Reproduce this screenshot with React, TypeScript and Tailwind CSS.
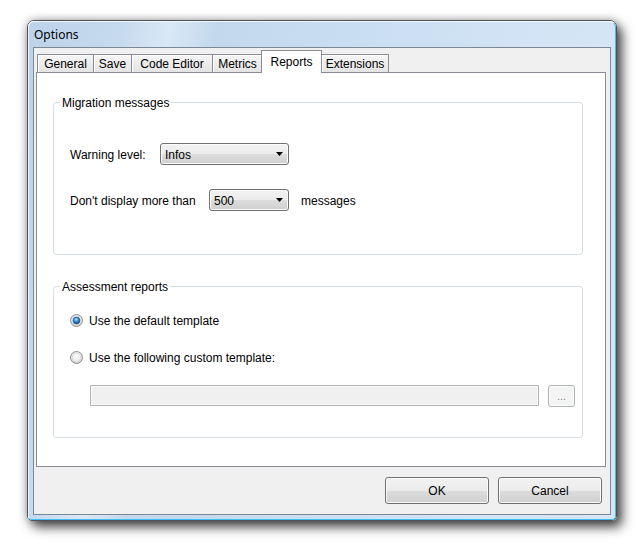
import React from "react";

function Radio({ checked, id }: { checked: boolean; id: string }) {
  return (
    <svg width="13" height="13" viewBox="0 0 13 13" className="shrink-0">
      <defs>
        <radialGradient id={`${id}-bg`} cx="50%" cy="40%" r="60%">
          <stop offset="0%" stopColor="#ffffff" />
          <stop offset="70%" stopColor="#e6e6e6" />
          <stop offset="100%" stopColor="#c4c4c4" />
        </radialGradient>
        <radialGradient id={`${id}-dot`} cx="45%" cy="35%" r="65%">
          <stop offset="0%" stopColor="#c4ebff" />
          <stop offset="45%" stopColor="#3893dc" />
          <stop offset="100%" stopColor="#0a4486" />
        </radialGradient>
      </defs>
      <circle cx="6.5" cy="6.5" r="6" fill={`url(#${id}-bg)`} stroke="#8e8f8f" strokeWidth="1" />
      <circle cx="6.5" cy="6.5" r="4.5" fill="none" stroke="#d4d4d4" strokeWidth="0.8" />
      {checked && <circle cx="6.5" cy="6.5" r="3.4" fill={`url(#${id}-dot)`} stroke="#174f8a" strokeWidth="0.6" />}
    </svg>
  );
}

function Arrow() {
  return (
    <svg width="7" height="4" viewBox="0 0 7 4" className="shrink-0">
      <path d="M0 0H7L3.5 4Z" fill="#000" />
    </svg>
  );
}

const vistaBtn =
  "rounded-[3px] border border-[#707070] bg-[linear-gradient(to_bottom,#f2f2f2_0%,#ebebeb_50%,#dddddd_50%,#cfcfcf_100%)] shadow-[inset_0_0_0_1px_#fcfcfc]";

const tabBase =
  "h-[18px] flex items-center justify-center border-t border-l border-[#898c95] bg-[linear-gradient(to_bottom,#f5f5f5,#e4e4e4)] shadow-[inset_1px_1px_0_#ffffff] text-[12px] text-black";

export default function App() {
  return (
    <div className="w-[644px] h-[551px] bg-white pl-[27px] pt-[20px] font-['Liberation_Sans',Arial,sans-serif]">
      {/* window */}
      <div className="w-[590px] h-[501px] border border-[#4d5259] rounded-t-[7px] rounded-b-[5px] shadow-[5px_6px_12px_rgba(0,0,0,0.7),0_0_10px_rgba(0,0,0,0.3)]">
        <div className="h-full border border-t-[#f3f8fd] border-l-[#eef5fc] border-r-[#3dbff0] border-b-[#3dbff0] rounded-t-[6px] rounded-b-[4px] px-[4px] pb-[4px] bg-[linear-gradient(100deg,#bdd3ea_0%,#c6daee_14%,#dae8f6_21%,#c3d8ed_28%,#cadef2_50%,#d2e4f5_75%,#d6e6f7_100%)] flex flex-col">
          {/* title */}
          <div className="h-[25px] flex items-center pl-[1px] text-[12px] text-black font-['Noto_Sans',sans-serif]">
            Options
          </div>
          {/* client */}
          <div className="flex-1 border border-[#7d8897] bg-[#f0f0f0] pt-[2px] pl-[2px] pr-[4px] flex flex-col">
            {/* tab strip */}
            <div className="h-[22px] flex items-end pl-[1px] relative z-10">
              <div className={`${tabBase} w-[56px]`}>General</div>
              <div className={`${tabBase} w-[38px]`}>Save</div>
              <div className={`${tabBase} w-[81px]`}>Code Editor</div>
              <div className={`${tabBase} w-[50px]`}>Metrics</div>
              <div className="relative z-10 h-[23px] -mb-px -ml-px -mr-px w-[61px] flex items-center justify-center border-t border-l border-r border-[#898c95] bg-white text-[12px] text-black">
                Reports
              </div>
              <div className={`${tabBase} w-[68px] border-r`}>Extensions</div>
            </div>
            {/* panel */}
            <div className="h-[395px] border border-[#898c95] bg-white pl-[16px] flex flex-col">
              {/* group 1 */}
              <fieldset className="mt-[22px] w-[530px] h-[160px] border border-[#d5dfe5] rounded-[3px]">
                <legend className="ml-[6px] px-[2px] pt-[1px] text-[12px] leading-[14px] text-black">Migration messages</legend>
                <div className="mt-[33px] pl-[16px] flex items-center text-[12px] text-black">
                  <span className="w-[90px] pt-[1px]">Warning level:</span>
                  <div className={`${vistaBtn} w-[129px] h-[22px] flex items-center pl-[4px] pr-[5px]`}>
                    <span className="flex-1 pt-[2px]">Infos</span>
                    <Arrow />
                  </div>
                </div>
                <div className="mt-[24px] pl-[16px] flex items-center text-[12px] text-black">
                  <span className="w-[139px] pt-[1px]">Don't display more than</span>
                  <div className={`${vistaBtn} w-[80px] h-[22px] flex items-center pl-[4px] pr-[5px]`}>
                    <span className="flex-1 pt-[2px]">500</span>
                    <Arrow />
                  </div>
                  <span className="ml-[12px] pt-[1px]">messages</span>
                </div>
              </fieldset>
              {/* group 2 */}
              <fieldset className="mt-[24px] w-[530px] h-[159px] border border-[#d5dfe5] rounded-[3px]">
                <legend className="ml-[6px] px-[2px] pt-[1px] text-[12px] leading-[14px] text-black">Assessment reports</legend>
                <div className="mt-[19px] h-[14px] pl-[16px] flex items-center text-[12px] text-black">
                  <Radio checked id="r1" />
                  <span className="ml-[6px] pt-[1px]">Use the default template</span>
                </div>
                <div className="mt-[23px] h-[14px] pl-[16px] flex items-center text-[12px] text-black">
                  <Radio checked={false} id="r2" />
                  <span className="ml-[6px] pt-[1px]">Use the following custom template:</span>
                </div>
                <div className="mt-[21px] pl-[36px] flex items-start">
                  <div className="w-[449px] h-[21px] border border-[#adb2b5] bg-[#f0f0f0] shadow-[inset_0_0_0_1px_#fbfbfb] rounded-[1px]" />
                  <div className="ml-[9px] w-[27px] h-[22px] rounded-[3px] border border-[#adb2b5] bg-[#f4f4f4] shadow-[inset_0_0_0_1px_#fcfcfc] flex items-end justify-center pb-[4px] text-[11px] leading-none text-[#8a8094]">
                    ...
                  </div>
                </div>
              </fieldset>
            </div>
            {/* buttons */}
            <div className="mt-[10px] pr-[4px] flex justify-end gap-[9px]">
              <div className={`${vistaBtn} w-[104px] h-[27px] flex items-center justify-center text-[12px] text-black`}>OK</div>
              <div className={`${vistaBtn} w-[104px] h-[27px] flex items-center justify-center text-[12px] text-black`}>Cancel</div>
            </div>
          </div>
        </div>
      </div>
    </div>
  );
}
